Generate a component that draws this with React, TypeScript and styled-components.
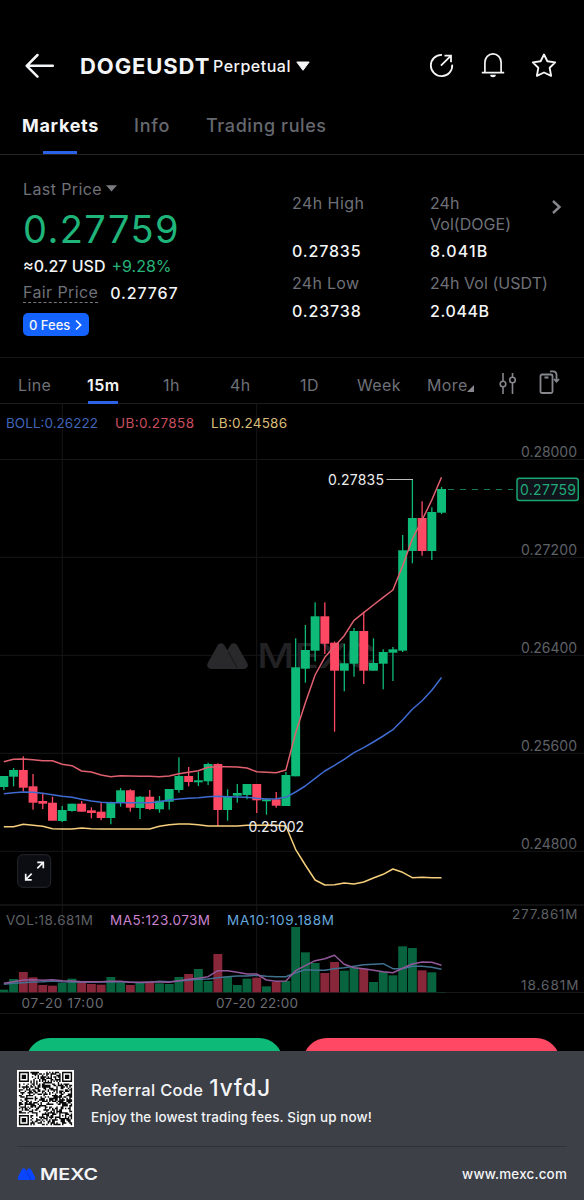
import React from "react";
import styled, { createGlobalStyle } from "styled-components";

const C = {
  up: "#0dba77",
  down: "#ff4964",
  text: "#f4f5f7",
  muted: "#6f7178",
  blue: "#2b62e8",
  line: "#1a1a1c",
};

const GlobalStyle = createGlobalStyle`
  body { margin: 0; background: #000; }
  * { box-sizing: border-box; }
  svg { display: block; flex: none; }
`;

const Screen = styled.main`
  width: 584px;
  height: 1200px;
  overflow: hidden;
  display: flex;
  flex-direction: column;
  background: #000;
  color: ${C.text};
  font-family: Inter, "Liberation Sans", sans-serif;
`;

const Header = styled.header`
  margin-top: 36px;
  height: 60px;
  padding: 0 27px 0 24px;
  display: flex;
  align-items: center;
`;

const Symbol = styled.h1`
  margin: 0 0 0 25px;
  width: 133px;
  font-size: 22px;
  font-weight: 700;
  letter-spacing: 0.9px;
  white-space: nowrap;
`;

const Contract = styled.span`
  width: 83px;
  font-size: 16px;
  font-weight: 500;
  letter-spacing: 0.5px;
`;

const Actions = styled.div`
  margin-left: auto;
  display: flex;
  align-items: center;
  gap: 25px;
`;

const Tabs = styled.nav`
  height: 59px;
  padding-left: 22px;
  display: flex;
  border-bottom: 1px solid #232325;
`;

const Tab = styled.div<{ $active?: boolean; $w: number; $ls: number }>`
  width: ${(p) => p.$w}px;
  display: flex;
  flex-direction: column;
  font-size: 18px;
  line-height: 60px;
  letter-spacing: ${(p) => p.$ls}px;
  white-space: nowrap;
  font-weight: ${(p) => (p.$active ? 700 : 500)};
  color: ${(p) => (p.$active ? C.text : "#66686f")};
`;

const TabMark = styled.i`
  width: 34px;
  height: 3px;
  margin: -5px 0 0 21px;
  background: ${C.blue};
`;

const Summary = styled.section`
  height: 203px;
  display: flex;
  border-bottom: 1px solid #161618;
`;

const PriceCol = styled.div`
  width: 292px;
  padding: 23px 0 0 23px;
  display: flex;
  flex-direction: column;
  align-items: flex-start;
`;

const Line = styled.div<{ $h: number; $gap?: number }>`
  height: ${(p) => p.$h}px;
  display: flex;
  align-items: center;
  gap: ${(p) => p.$gap ?? 0}px;
  white-space: nowrap;
`;

const Txt = styled.span<{ $size?: number; $ls?: number; $color?: string; $weight?: number }>`
  font-size: ${(p) => p.$size ?? 16}px;
  letter-spacing: ${(p) => p.$ls ?? 0}px;
  color: ${(p) => p.$color ?? C.text};
  font-weight: ${(p) => p.$weight ?? 400};
`;

const Dashed = styled(Txt)`
  line-height: 19px;
  border-bottom: 1px dashed #77797f;
`;

const FeeBadge = styled.div`
  width: 66px;
  height: 23px;
  padding: 0 7px 0 6px;
  border-radius: 5px;
  background: #1463ff;
  display: flex;
  align-items: center;
  justify-content: space-between;
  white-space: nowrap;
`;

const StatCol = styled.div<{ $w: number }>`
  width: ${(p) => p.$w}px;
  padding-top: 38px;
  display: flex;
  flex-direction: column;
`;

const StatLabel = styled.div<{ $h: number; $ls?: number }>`
  height: ${(p) => p.$h}px;
  font-size: 16px;
  line-height: 21px;
  letter-spacing: ${(p) => p.$ls ?? 0.45}px;
  color: ${C.muted};
  white-space: nowrap;
`;

const StatValue = styled.div<{ $ls?: number }>`
  height: 32px;
  font-size: 16px;
  line-height: 21px;
  font-weight: 500;
  letter-spacing: ${(p) => p.$ls ?? 0.85}px;
`;

const More = styled.div`
  padding: 45px 0 0 1px;
`;

const Intervals = styled.nav`
  height: 46px;
  display: flex;
  padding-left: 18px;
  border-bottom: 1px solid #1c1c1e;
`;

const Interval = styled.div<{ $w: number; $active?: boolean }>`
  width: ${(p) => p.$w}px;
  font-size: 16px;
  line-height: 54px;
  height: 45px;
  letter-spacing: 0.4px;
  font-weight: ${(p) => (p.$active ? 600 : 400)};
  color: ${(p) => (p.$active ? C.text : C.muted)};
`;

const IntervalMark = styled.i`
  display: block;
  width: 30px;
  height: 3px;
  margin: -11px 0 0 1px;
  background: ${C.blue};
`;

const ToolIcons = styled.div`
  display: flex;
  gap: 21px;
  padding: 12px 0 0 23px;
`;

const Orders = styled.div`
  height: 37px;
  padding: 24px 24px 0 26px;
  display: flex;
  justify-content: space-between;
  overflow: hidden;
`;

const OrderButton = styled.div<{ $color: string }>`
  width: 257px;
  height: 48px;
  border-radius: 24px;
  background: ${(p) => p.$color};
`;

const Footer = styled.footer`
  height: 149px;
  padding: 19px 17px 0;
  background: #3d4047;
  display: flex;
  flex-direction: column;
`;

const Referral = styled.div`
  height: 77px;
  display: flex;
  gap: 17px;
  border-bottom: 1px solid #2f3238;
`;

const ReferralText = styled.div`
  display: flex;
  flex-direction: column;
`;

const ReferralLine = styled.div`
  height: 37px;
  padding-top: 4px;
  display: flex;
  align-items: baseline;
  gap: 6px;
  white-space: nowrap;
`;

const Brand = styled.div`
  height: 53px;
  display: flex;
  align-items: center;
  justify-content: space-between;
`;

/* ---------- chart data: [up, bodyTop, bodyBottom, high, low] ---------- */
type Candle = [number, number, number, number, number];
const candles: Candle[] = [
  [1, 776, 787, 776, 790], [1, 770, 776.7, 768, 786.3], [0, 770, 787.7, 756.3, 791.3],
  [0, 786.3, 802.7, 774, 809.7], [0, 801, 803.7, 793.7, 809], [0, 802.7, 820.7, 796.7, 820.7],
  [1, 810, 821, 806, 822], [1, 803.7, 811, 803.7, 811.7], [0, 803.7, 811.7, 801, 811.7],
  [0, 810.3, 813, 807.3, 818.3], [0, 811.7, 818, 802.3, 820.3], [1, 802.3, 818, 801.7, 824.3],
  [1, 790.3, 802, 788, 806.7], [0, 790.3, 807.7, 789.3, 811.7], [1, 796.7, 808, 796, 819],
  [0, 796.7, 809, 790, 810], [1, 800.7, 809.3, 796, 812.7], [1, 789, 801.7, 789, 809.7],
  [1, 776, 790, 757.3, 792.7], [0, 776, 782, 767, 786.3], [1, 780.3, 782.3, 771.7, 786],
  [1, 764, 781.3, 762.7, 785], [0, 764, 810, 763.3, 826], [1, 796.3, 810, 789.3, 820.7],
  [1, 793, 795.7, 784, 802.7], [1, 784, 795, 784, 799.3], [0, 784, 800.3, 784, 813],
  [1, 799.3, 801.3, 798.3, 814.7], [0, 799.3, 805.7, 792, 807.7], [1, 775, 806, 772, 806],
  [1, 667.3, 776.3, 638.3, 776.3], [1, 650, 668.7, 625, 682.7], [1, 616.3, 650.7, 602.3, 661.3],
  [0, 616.3, 643.7, 602.3, 654], [0, 642.7, 670.7, 641.5, 731.7], [1, 663.3, 670.7, 644, 691.3],
  [1, 631, 663.7, 628, 676.7], [0, 631, 670.7, 611.7, 684], [1, 663, 670.7, 638.3, 670.7],
  [1, 652, 663.7, 649.3, 689.3], [1, 649.3, 652.7, 647, 681], [1, 550.3, 650.7, 535, 652],
  [1, 518, 551, 479, 563.3], [0, 518, 551, 501.3, 555.7], [1, 512, 551, 507.3, 560],
  [1, 489, 512.7, 487, 514],
];

const upper = [
  761.7, 759.3, 759, 759.7, 760.7, 760.7, 764.3, 765.7, 771, 772, 775, 776.7, 775.7, 776, 776.3,
  776.3, 776.7, 776, 773.7, 772.3, 770.7, 767.3, 766.7, 766.7, 767, 768, 771.7, 772.3, 772.7, 770,
  733, 703, 675, 657.3, 646.5, 635.7, 620.3, 612.7, 605, 597.3, 590, 566, 539, 520, 500, 477.3,
];
const middle = [
  793.7, 792.7, 792, 792.3, 793.3, 794.7, 796.3, 797.3, 799.3, 801, 802.3, 802.7, 802.7, 802.7,
  802.7, 802.7, 801.7, 800, 799, 798.3, 797.7, 796.7, 796.3, 796.7, 797, 797.3, 798.3, 799, 798.7,
  797.3, 792, 786, 778.3, 771, 765.3, 759.3, 752.7, 747.7, 742, 736, 729.7, 720, 709.3, 700.7,
  690.3, 677.5,
];
const lower = [
  826.7, 826.7, 824.3, 825.3, 826.3, 828.7, 829, 829, 828, 828.7, 829, 829, 829, 829, 829, 829,
  826.3, 824.7, 824, 824, 824.7, 826, 826, 826, 826, 825.3, 825.3, 825, 825.3, 826, 849.3, 865,
  880, 885, 884.7, 883, 884, 882, 878, 874.3, 869, 872.3, 877.7, 877.3, 877.7, 877.7,
];
const volume = [
  269, 237, 216, 232, 255, 257, 249, 236, 248, 252, 254, 231, 248, 255, 248, 246, 250, 252, 231,
  222, 207, 243, 162, 230, 255, 236, 233, 259, 246, 243, 81, 157, 189, 219, 186, 212, 203, 207,
  246, 216, 226, 139, 144, 211, 217, 276,
].map((v) => 900 + v / 3);
const ma5 = [
  250, 245, 240, 239, 241, 239, 242, 243, 245, 245, 245, 244, 244, 247, 247, 246, 246, 247, 242,
  238, 235, 230, 212, 212, 217, 222, 222, 240, 244, 243, 212, 197, 182, 176, 166, 193, 203, 206,
  211, 215, 218, 205, 192, 186, 187, 196,
].map((v) => 900 + v / 3);
const ma10 = [
  253, 250, 248, 246, 245, 243, 245, 246, 247, 247, 246, 246, 245, 247, 248, 247, 244, 245, 243,
  241, 238, 237, 233, 230, 228, 228, 226, 229, 230, 230, 218, 209, 211, 211, 206, 203, 199, 194,
  193, 191, 206, 206, 199, 199, 202, 208,
].map((v) => 900 + v / 3);

const cx = (i: number) => 3.8 + i * 9.727;
const points = (ys: number[]) => ys.map((y, i) => `${cx(i).toFixed(1)},${y.toFixed(1)}`).join(" ");

type LabelProps = { x: number; y: number; w: number; fill: string; size?: number; children: string };
const Label = ({ x, y, w, fill, size = 14, children }: LabelProps) => (
  <text x={x} y={y} fill={fill} fontSize={size} textLength={w}>
    {children}
  </text>
);

const Mountains = ({ fill, x = 0, y = 0, w, h }: { fill: string; x?: number; y?: number; w: number; h: number }) => (
  <svg x={x} y={y} width={w} height={h} viewBox="0 0 36 24" preserveAspectRatio="none">
    <path
      fill={fill}
      d="M9.2 2.2 C10.6 -.4 14 -.4 15.400 2.200 L17.900 6.600 L20.400 2.200 C21.800 -.4 25.200 -.4 26.600 2.200 L35.300 18.500 C36.800 21.300 35.200 24 32.300 24 H3.700 C.8 24 -.8 21.300 .7 18.500 Z"
    />
    <path d="M18.600 8 L26.500 23" stroke="#000" strokeOpacity=".28" strokeWidth="1.400" />
  </svg>
);

const axis: [string, number][] = [
  ["0.28000", 459.5], ["0.27200", 557.3], ["0.26400", 655.3], ["0.25600", 753.3], ["0.24800", 851.3],
];

const Chart = () => (
  <svg width="584" height="610" viewBox="0 404 584 610" fontFamily="Inter, sans-serif">
    <g stroke="#171719" strokeWidth="1">
      {axis.map(([t, y]) => (
        <line key={t} x1="0" x2="584" y1={y} y2={y} />
      ))}
      <line x1="62.300" x2="62.300" y1="404" y2="992" />
      <line x1="256.700" x2="256.700" y1="404" y2="992" />
      <line x1="0" x2="584" y1="905" y2="905" strokeWidth="1.500" />
      <line x1="0" x2="584" y1="992.500" y2="992.500" />
      <line x1="0" x2="584" y1="1013.500" y2="1013.500" />
    </g>

    <Mountains fill="#29292b" x={207} y={643} w={41} h={26} />
    <text x="257" y="668" fill="#222224" fontSize="34" fontWeight="500" textLength="119" lengthAdjust="spacingAndGlyphs">
      MEXC
    </text>

    {candles.map(([up, top, bottom, high, low], i) => (
      <g key={i} fill={up ? C.up : C.down}>
        <rect x={cx(i) - 0.6} y={high} width="1.300" height={low - high} />
        <rect x={cx(i) - 4.4} y={top} width="8.900" height={bottom - top} />
      </g>
    ))}
    {volume.map((y, i) => (
      <rect key={i} x={cx(i) - 4.4} y={y} width="8.900" height={992.3 - y} fill={candles[i][0] ? "#08633f" : "#89273a"} />
    ))}

    <g fill="none" strokeWidth="1.500" strokeLinejoin="round">
      <polyline points={points(upper)} stroke="#e0606f" />
      <polyline points={points(middle)} stroke="#3f6bd0" />
      <polyline points={points(lower)} stroke="#f6cf7c" />
      <polyline points={points(ma10)} stroke="#41718f" />
      <polyline points={points(ma5)} stroke="#91589a" />
    </g>

    <Label x={6} y={428} w={92} fill="#3f64b8" size={13.5}>BOLL:0.26222</Label>
    <Label x={115} y={428} w={79} fill="#c94e5e" size={13.5}>UB:0.27858</Label>
    <Label x={211} y={428} w={76} fill="#d9bd78" size={13.5}>LB:0.24586</Label>

    {axis.map(([t, y]) => (
      <Label key={t} x={521} y={y - 2.3} w={56} fill="#5e6066">{t}</Label>
    ))}
    <Label x={512} y={919} w={65.5} fill="#5e6066" size={13.5}>277.861M</Label>
    <Label x={521} y={990} w={57.5} fill="#5e6066" size={13.5}>18.681M</Label>

    <Label x={328} y={485} w={56} fill="#eeeef0">0.27835</Label>
    <path d="M386.500 479.500 H413" stroke="#bdbdbf" />
    <path d="M448 489.500 H513" stroke="#0f7a52" strokeDasharray="6 6" />
    <rect x="517" y="478.200" width="61.300" height="22.300" rx="2.500" fill="#10131a" stroke="#18a670" strokeWidth="1.500" />
    <Label x={520} y={495} w={56} fill="#20a878">0.27759</Label>
    <Label x={248.5} y={831.5} w={55.5} fill="#eeeef0">0.25002</Label>

    <rect x="17.700" y="854.700" width="33" height="32.600" rx="5" fill="#0c0d12" stroke="#27282d" />
    <path
      d="M37.300 868.300 L43.300 862.300 M37.300 862.300 H43.300 V868.300 M31.700 873.700 L25.700 879.700 M25.700 873.800 V879.800 H31.700"
      fill="none" stroke="#f4f5f7" strokeWidth="1.700"
    />

    <Label x={6} y={925} w={87} fill="#5e6066" size={13.5}>VOL:18.681M</Label>
    <Label x={110} y={925} w={100} fill="#c983cf" size={13.5}>MA5:123.073M</Label>
    <Label x={227} y={925} w={107} fill="#65a8de" size={13.5}>MA10:109.188M</Label>
    <Label x={21.5} y={1008} w={82} fill="#6a6c72" size={13.5}>07-20 17:00</Label>
    <Label x={216} y={1008} w={82} fill="#6a6c72" size={13.5}>07-20 22:00</Label>
  </svg>
);

/* ---------- QR code: 37 x 37 modules ---------- */
const N = 37;
const finder = (r: number, c: number) => {
  const d = Math.max(Math.abs(r - 3), Math.abs(c - 3));
  return d === 3 || d <= 1;
};
const moduleOn = (r: number, c: number) => {
  if (r < 8 && c < 8) return r < 7 && c < 7 && finder(r, c);
  if (r < 8 && c > N - 9) return r < 7 && c > N - 8 && finder(r, c - (N - 7));
  if (r > N - 9 && c < 8) return r > N - 8 && c < 7 && finder(r - (N - 7), c);
  const a = Math.max(Math.abs(r - 30), Math.abs(c - 30));
  if (a <= 2) return a !== 1;
  if (r === 6) return c % 2 === 0;
  if (c === 6) return r % 2 === 0;
  const n = Math.sin(r * 127.1 + c * 311.7) * 43758.5453;
  return n - Math.floor(n) < 0.5;
};
const qrPath = Array.from({ length: N * N }, (_, k) => [Math.floor(k / N), k % N])
  .filter(([r, c]) => moduleOn(r, c))
  .map(([r, c]) => `M${c} ${r}h1v1h-1z`)
  .join("");

const QrCode = () => (
  <svg width="57" height="57" viewBox="-1.300 -1.300 39.600 39.600">
    <rect x="-1.300" y="-1.300" width="39.600" height="39.600" fill="#fff" />
    <path d={qrPath} fill="#0a0a0a" />
  </svg>
);

export default function App() {
  return (
    <>
      <GlobalStyle />
      <Screen>
        <Header>
          <svg width="31" height="26" viewBox="0 0 31 26" fill="none" stroke="#f4f5f7" strokeWidth="2.500" strokeLinecap="round" strokeLinejoin="round">
            <path d="M13.500 2 L2.700 12.800 L13.500 23.600 M2.700 12.800 H28.800" />
          </svg>
          <Symbol>DOGEUSDT</Symbol>
          <Contract>Perpetual</Contract>
          <svg width="14" height="10" viewBox="0 0 14 10">
            <path d="M.8 1 H13.200 L7 9.300Z" fill="#f4f5f7" stroke="#f4f5f7" strokeLinejoin="round" />
          </svg>
          <Actions>
            <svg width="26" height="26" viewBox="0 0 26 26" fill="none" stroke="#f4f5f7" strokeWidth="1.800">
              <path d="M13 1.800 A10.700 10.700 0 1 0 23.200 11.600 M11.900 12.700 L21.300 3.300 M15.500 2.700 H22 V9.300" />
            </svg>
            <svg width="26" height="26" viewBox="0 0 26 26" fill="none" stroke="#f4f5f7" strokeWidth="1.700">
              <path d="M4.900 19.400 V9.400 A8.100 8.500 0 0 1 21.100 9.400 V19.400 M1.800 19.700 H24.200" />
              <path d="M10.200 21.800 H15.800 A2.800 2.500 0 0 1 10.200 21.800Z" fill="#f4f5f7" stroke="none" />
            </svg>
            <svg width="26" height="26" viewBox="0 0 26 26" fill="none" stroke="#f4f5f7" strokeWidth="1.900" strokeLinejoin="round">
              <path d="M13 1.500 L16.400 8.200 L24.200 9.400 L18.700 14.800 L20.100 22.800 L13 19.500 L5.900 22.800 L7.300 14.800 L1.800 9.400 L9.600 8.200Z" />
            </svg>
          </Actions>
        </Header>

        <Tabs>
          <Tab $active $w={112} $ls={0.7}>Markets<TabMark /></Tab>
          <Tab $w={72} $ls={0.8}>Info</Tab>
          <Tab $w={140} $ls={0.6}>Trading rules</Tab>
        </Tabs>

        <Summary>
          <PriceCol>
            <Line $h={21} $gap={4}>
              <Txt $color={C.muted} $ls={0.4}>Last Price</Txt>
              <svg width="11" height="7" viewBox="0 0 11 7"><path d="M0 .3H11L5.500 6.500Z" fill="#7a7c82" /></svg>
            </Line>
            <Line $h={60}>
              <Txt $size={38} $ls={1.4} $color="#1fb47a">0.27759</Txt>
            </Line>
            <Line $h={13} $gap={6}>
              <Txt $weight={500}>≈0.27 USD</Txt>
              <Txt $color="#27b57a">+9.28%</Txt>
            </Line>
            <Line $h={41} $gap={12}>
              <Dashed $color={C.muted} $ls={0.4}>Fair Price</Dashed>
              <Txt $weight={500} $ls={0.85}>0.27767</Txt>
            </Line>
            <FeeBadge>
              <Txt $size={13} $weight={500}>0 Fees</Txt>
              <svg width="7" height="10" viewBox="0 0 7 10" fill="none" stroke="#fff" strokeWidth="1.500"><path d="M1 .5 L5.700 5 L1 9.500" /></svg>
            </FeeBadge>
          </PriceCol>
          <StatCol $w={138}>
            <StatLabel $h={48}>24h High</StatLabel>
            <StatValue>0.27835</StatValue>
            <StatLabel $h={28} $ls={0.3}>24h Low</StatLabel>
            <StatValue>0.23738</StatValue>
          </StatCol>
          <StatCol $w={120}>
            <StatLabel $h={48} $ls={0.05}>24h<br />Vol(DOGE)</StatLabel>
            <StatValue $ls={1.1}>8.041B</StatValue>
            <StatLabel $h={28} $ls={0.05}>24h Vol (USDT)</StatLabel>
            <StatValue $ls={0.6}>2.044B</StatValue>
          </StatCol>
          <More>
            <svg width="11" height="14" viewBox="0 0 11 14" fill="none" stroke="#85878d" strokeWidth="2.400"><path d="M2 1 L8.500 7 L2 13" /></svg>
          </More>
        </Summary>

        <Intervals>
          <Interval $w={69}>Line</Interval>
          <Interval $w={76} $active>15m<IntervalMark /></Interval>
          <Interval $w={67}>1h</Interval>
          <Interval $w={70}>4h</Interval>
          <Interval $w={57}>1D</Interval>
          <Interval $w={70}>Week</Interval>
          <Interval $w={40}>More</Interval>
          <svg width="8" height="40" viewBox="0 0 8 40"><path d="M7 27V34H0Z" fill="#85878d" /></svg>
          <ToolIcons>
            <svg width="20" height="26" viewBox="0 0 20 26" fill="none" stroke="#85878d" strokeWidth="1.600">
              <path d="M5 3V11M5 17V24M14.500 3V7M14.500 13V24" />
              <circle cx="5" cy="14" r="2.800" /><circle cx="14.500" cy="10" r="2.800" />
            </svg>
            <svg width="21" height="26" viewBox="0 0 21 26" fill="none" stroke="#85878d" strokeWidth="1.800">
              <rect x="1.500" y="4.500" width="12" height="18.500" rx="1.500" />
              <path d="M5.500 7.500H9.500M11 1.300H14Q17.500 1.300 17.500 5V11M15 9L17.500 11.600L20 9" />
            </svg>
          </ToolIcons>
        </Intervals>

        <Chart />

        <Orders>
          <OrderButton $color={C.up} />
          <OrderButton $color={C.down} />
        </Orders>

        <Footer>
          <Referral>
            <QrCode />
            <ReferralText>
              <ReferralLine>
                <Txt $size={16.5} $weight={500} $ls={0.3}>Referral Code</Txt>
                <Txt $size={22.5} $weight={500} $ls={0.8}>1vfdJ</Txt>
              </ReferralLine>
              <Line $h={19}>
                <Txt $size={13.4} $weight={500} $ls={0.14}>Enjoy the lowest trading fees. Sign up now!</Txt>
              </Line>
            </ReferralText>
          </Referral>
          <Brand>
            <svg width="92" height="24" viewBox="0 0 92 24" fontFamily="Inter, sans-serif">
              <Mountains fill="#0a45ff" x={0.5} y={6} w={18} h={12} />
              <text x="23" y="18" fill="#f4f5f7" fontSize="16.500" fontWeight="600" textLength="58" lengthAdjust="spacingAndGlyphs">MEXC</text>
            </svg>
            <Txt $size={13.4} $weight={500} $ls={0.2}>www.mexc.com</Txt>
          </Brand>
        </Footer>
      </Screen>
    </>
  );
}
